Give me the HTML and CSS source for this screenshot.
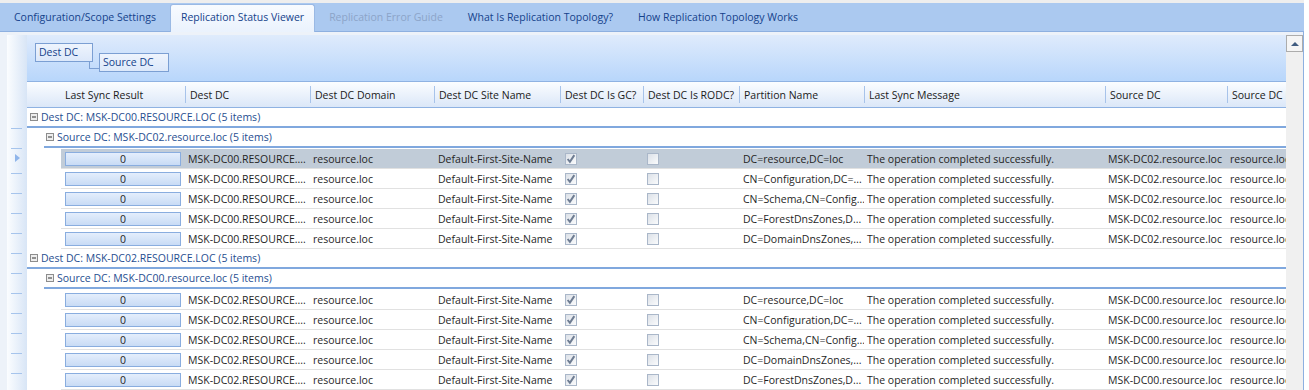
FILE: index.html
```html
<!DOCTYPE html>
<html lang="en">
<head>
    <meta charset="UTF-8">
    <meta name="viewport" content="width=device-width, initial-scale=1.0">
    <title>Replication Status Viewer</title>
    <link rel="stylesheet" href="styles.css">
</head>
<body>
    <div class="window">
        <div class="tabs">
            <div class="tab">Configuration/Scope Settings</div>
            <div class="tab active">Replication Status Viewer</div>
            <div class="tab disabled">Replication Error Guide</div>
            <div class="tab">What Is Replication Topology?</div>
            <div class="tab">How Replication Topology Works</div>
        </div>

        <div class="page">
            <!-- row indicator column -->
            <div class="indicator">
                <div class="ind-top"></div>
                <div class="ind-cell"></div>
                <div class="ind-cell"></div>
                <div class="ind-cell current"><span class="arrow"></span></div>
                <div class="ind-cell"></div>
                <div class="ind-cell"></div>
                <div class="ind-cell"></div>
                <div class="ind-cell"></div>
                <div class="ind-cell"></div>
                <div class="ind-cell"></div>
                <div class="ind-cell"></div>
                <div class="ind-cell"></div>
                <div class="ind-cell"></div>
                <div class="ind-cell"></div>
                <div class="ind-cell"></div>
            </div>

            <div class="grid">
                <div class="group-panel">
                    <div class="gp-item gp-dest">Dest DC</div>
                    <div class="gp-item gp-source">Source DC</div>
                </div>

                <div class="col-header">
                    <div class="hcell">Last Sync Result</div>
                    <div class="hcell">Dest DC</div>
                    <div class="hcell">Dest DC Domain</div>
                    <div class="hcell">Dest DC Site Name</div>
                    <div class="hcell">Dest DC Is GC?</div>
                    <div class="hcell">Dest DC Is RODC?</div>
                    <div class="hcell">Partition Name</div>
                    <div class="hcell">Last Sync Message</div>
                    <div class="hcell">Source DC</div>
                    <div class="hcell">Source DC Domain</div>
                </div>

                <div class="rows">
                    <div class="group">
                        <svg class="toggle" width="8" height="8" viewBox="0 0 8 8"><rect x="0.5" y="0.5" width="7" height="7"/><path d="M2 4h4"/></svg>
                        Dest DC: MSK-DC00.RESOURCE.LOC (5 items)
                    </div>
                    <div class="group lvl2">
                        <svg class="toggle" width="8" height="8" viewBox="0 0 8 8"><rect x="0.5" y="0.5" width="7" height="7"/><path d="M2 4h4"/></svg>
                        Source DC: MSK-DC02.resource.loc (5 items)
                    </div>
                    <div class="block">
                        <div class="row selected">
                            <div class="result"><span class="res">0</span></div>
                            <div>MSK-DC00.RESOURCE....</div>
                            <div>resource.loc</div>
                            <div class="site">Default-First-Site-Name</div>
                            <div class="cb gc"><span class="chk"><svg viewBox="0 0 9 9"><path d="M1.5 4.5l2 2.5 4-6"/></svg></span></div>
                            <div class="cb"><span class="chk"></span></div>
                            <div class="part">DC=resource,DC=loc</div>
                            <div>The operation completed successfully.</div>
                            <div>MSK-DC02.resource.loc</div>
                            <div>resource.loc</div>
                        </div>
                        <div class="row">
                            <div class="result"><span class="res">0</span></div>
                            <div>MSK-DC00.RESOURCE....</div>
                            <div>resource.loc</div>
                            <div class="site">Default-First-Site-Name</div>
                            <div class="cb gc"><span class="chk"><svg viewBox="0 0 9 9"><path d="M1.5 4.5l2 2.5 4-6"/></svg></span></div>
                            <div class="cb"><span class="chk"></span></div>
                            <div class="part">CN=Configuration,DC=...</div>
                            <div>The operation completed successfully.</div>
                            <div>MSK-DC02.resource.loc</div>
                            <div>resource.loc</div>
                        </div>
                        <div class="row">
                            <div class="result"><span class="res">0</span></div>
                            <div>MSK-DC00.RESOURCE....</div>
                            <div>resource.loc</div>
                            <div class="site">Default-First-Site-Name</div>
                            <div class="cb gc"><span class="chk"><svg viewBox="0 0 9 9"><path d="M1.5 4.5l2 2.5 4-6"/></svg></span></div>
                            <div class="cb"><span class="chk"></span></div>
                            <div class="part">CN=Schema,CN=Config...</div>
                            <div>The operation completed successfully.</div>
                            <div>MSK-DC02.resource.loc</div>
                            <div>resource.loc</div>
                        </div>
                        <div class="row">
                            <div class="result"><span class="res">0</span></div>
                            <div>MSK-DC00.RESOURCE....</div>
                            <div>resource.loc</div>
                            <div class="site">Default-First-Site-Name</div>
                            <div class="cb gc"><span class="chk"><svg viewBox="0 0 9 9"><path d="M1.5 4.5l2 2.5 4-6"/></svg></span></div>
                            <div class="cb"><span class="chk"></span></div>
                            <div class="part">DC=ForestDnsZones,D...</div>
                            <div>The operation completed successfully.</div>
                            <div>MSK-DC02.resource.loc</div>
                            <div>resource.loc</div>
                        </div>
                        <div class="row">
                            <div class="result"><span class="res">0</span></div>
                            <div>MSK-DC00.RESOURCE....</div>
                            <div>resource.loc</div>
                            <div class="site">Default-First-Site-Name</div>
                            <div class="cb gc"><span class="chk"><svg viewBox="0 0 9 9"><path d="M1.5 4.5l2 2.5 4-6"/></svg></span></div>
                            <div class="cb"><span class="chk"></span></div>
                            <div class="part">DC=DomainDnsZones,...</div>
                            <div>The operation completed successfully.</div>
                            <div>MSK-DC02.resource.loc</div>
                            <div>resource.loc</div>
                        </div>
                    </div>

                    <div class="group">
                        <svg class="toggle" width="8" height="8" viewBox="0 0 8 8"><rect x="0.5" y="0.5" width="7" height="7"/><path d="M2 4h4"/></svg>
                        Dest DC: MSK-DC02.RESOURCE.LOC (5 items)
                    </div>
                    <div class="group lvl2">
                        <svg class="toggle" width="8" height="8" viewBox="0 0 8 8"><rect x="0.5" y="0.5" width="7" height="7"/><path d="M2 4h4"/></svg>
                        Source DC: MSK-DC00.resource.loc (5 items)
                    </div>
                    <div class="block">
                        <div class="row">
                            <div class="result"><span class="res">0</span></div>
                            <div>MSK-DC02.RESOURCE....</div>
                            <div>resource.loc</div>
                            <div class="site">Default-First-Site-Name</div>
                            <div class="cb gc"><span class="chk"><svg viewBox="0 0 9 9"><path d="M1.5 4.5l2 2.5 4-6"/></svg></span></div>
                            <div class="cb"><span class="chk"></span></div>
                            <div class="part">DC=resource,DC=loc</div>
                            <div>The operation completed successfully.</div>
                            <div>MSK-DC00.resource.loc</div>
                            <div>resource.loc</div>
                        </div>
                        <div class="row">
                            <div class="result"><span class="res">0</span></div>
                            <div>MSK-DC02.RESOURCE....</div>
                            <div>resource.loc</div>
                            <div class="site">Default-First-Site-Name</div>
                            <div class="cb gc"><span class="chk"><svg viewBox="0 0 9 9"><path d="M1.5 4.5l2 2.5 4-6"/></svg></span></div>
                            <div class="cb"><span class="chk"></span></div>
                            <div class="part">CN=Configuration,DC=...</div>
                            <div>The operation completed successfully.</div>
                            <div>MSK-DC00.resource.loc</div>
                            <div>resource.loc</div>
                        </div>
                        <div class="row">
                            <div class="result"><span class="res">0</span></div>
                            <div>MSK-DC02.RESOURCE....</div>
                            <div>resource.loc</div>
                            <div class="site">Default-First-Site-Name</div>
                            <div class="cb gc"><span class="chk"><svg viewBox="0 0 9 9"><path d="M1.5 4.5l2 2.5 4-6"/></svg></span></div>
                            <div class="cb"><span class="chk"></span></div>
                            <div class="part">CN=Schema,CN=Config...</div>
                            <div>The operation completed successfully.</div>
                            <div>MSK-DC00.resource.loc</div>
                            <div>resource.loc</div>
                        </div>
                        <div class="row">
                            <div class="result"><span class="res">0</span></div>
                            <div>MSK-DC02.RESOURCE....</div>
                            <div>resource.loc</div>
                            <div class="site">Default-First-Site-Name</div>
                            <div class="cb gc"><span class="chk"><svg viewBox="0 0 9 9"><path d="M1.5 4.5l2 2.5 4-6"/></svg></span></div>
                            <div class="cb"><span class="chk"></span></div>
                            <div class="part">DC=DomainDnsZones,...</div>
                            <div>The operation completed successfully.</div>
                            <div>MSK-DC00.resource.loc</div>
                            <div>resource.loc</div>
                        </div>
                        <div class="row">
                            <div class="result"><span class="res">0</span></div>
                            <div>MSK-DC02.RESOURCE....</div>
                            <div>resource.loc</div>
                            <div class="site">Default-First-Site-Name</div>
                            <div class="cb gc"><span class="chk"><svg viewBox="0 0 9 9"><path d="M1.5 4.5l2 2.5 4-6"/></svg></span></div>
                            <div class="cb"><span class="chk"></span></div>
                            <div class="part">DC=ForestDnsZones,D...</div>
                            <div>The operation completed successfully.</div>
                            <div>MSK-DC00.resource.loc</div>
                            <div>resource.loc</div>
                        </div>
                    </div>
                </div>
            </div>

            <div class="vscroll">
                <div class="vscroll-btn"><span class="up"></span></div>
            </div>
        </div>
    </div>
</body>
</html>
```

FILE: styles.css
```css
/* Replication status viewer - grid page */
body {
    margin: 0;
    background: #fff;
    font-family: "Open Sans", "Noto Sans", sans-serif;
    font-size: 10.5px;
    color: #1f1f1f;
}

.window {
    width: 1304px;
    height: 390px;
    border-top: 3px solid #eeeeee;
    box-sizing: border-box;
    overflow: hidden;
}

/* tab strip */
.tabs {
    display: flex;
    align-items: flex-end;
    height: 29px;
    box-sizing: border-box;
    padding-left: 3px;
    background: #abc9f0;
    border-bottom: 1px solid #8eb0e0;
}

.tab {
    height: 27px;
    line-height: 26px;
    padding: 0 11px;
    margin-right: 3px;
    box-sizing: border-box;
    color: #15428b;
    white-space: nowrap;
}

.tab.active {
    height: 28px;
    margin-bottom: -1px;
    padding: 0 10px;
    line-height: 25px;
    background: linear-gradient(#f8fbff, #eaf2fd);
    border: 1px solid #9ab9e4;
    border-bottom: none;
    border-radius: 3px 3px 0 0;
}

.tab.disabled {
    color: #8ba4c8;
}

/* page body */
.page {
    display: flex;
    height: 358px;
    box-sizing: border-box;
    padding: 3px 0 0 7px;
    background: #edf2f9;
    border-right: 1px solid #8db0e0;
}

.indicator {
    width: 20px;
    flex: none;
    background: linear-gradient(to right, #fbfdff, #d8e5f6);
}

.ind-top {
    height: 74px;
}

.ind-cell {
    height: 20px;
    box-sizing: border-box;
    background: linear-gradient(#a6c4ec, #a6c4ec) 4px bottom / 11px 1px no-repeat;
}

.ind-cell .arrow {
    display: block;
    width: 0;
    height: 0;
    margin: 5px 0 0 8px;
    border-left: 5px solid #8fb5ea;
    border-top: 4px solid transparent;
    border-bottom: 4px solid transparent;
}

.grid {
    width: 1259px;
    flex: none;
    overflow: hidden;
    background: #fff;
}

/* group by panel */
.group-panel {
    height: 46px;
    box-sizing: border-box;
    padding: 8px 0 0 8px;
    display: flex;
    align-items: flex-start;
    background: linear-gradient(#dfebfc, #b8d6fb);
}

.gp-item {
    height: 19px;
    line-height: 17px;
    box-sizing: border-box;
    padding-left: 3px;
    border: 1px solid #7b9fd3;
    background: linear-gradient(#eef4fd, #dce8fa);
    color: #15428b;
    white-space: nowrap;
}

.gp-dest {
    width: 58px;
}

.gp-source {
    width: 70px;
    margin: 10px 0 0 6px;
    position: relative;
}

.gp-source::before {
    content: "";
    position: absolute;
    left: -11px;
    top: 8px;
    width: 10px;
    height: 6px;
    border-left: 1px solid #7b9fd3;
    border-bottom: 1px solid #7b9fd3;
}

/* column header + rows share the same columns */
.col-header,
.row {
    display: grid;
    grid-template-columns: 124px 125px 124px 126px 83px 96px 125px 241px 122px 140px;
}

.col-header {
    height: 27px;
    box-sizing: border-box;
    padding-left: 34px;
    border-top: 1px solid #8fb2e2;
    border-bottom: 1px solid #8fb2e2;
    background: linear-gradient(#fbfdff, #dbe7f8);
    color: #1a1a1a;
}

.hcell {
    padding-left: 5px;
    line-height: 26px;
    white-space: nowrap;
    overflow: hidden;
}

.hcell:first-child {
    padding-left: 4px;
}

.hcell + .hcell {
    background: linear-gradient(#a7c3ea, #a7c3ea) left center / 1px 17px no-repeat;
}

/* group rows */
.group {
    height: 20px;
    box-sizing: border-box;
    padding-left: 3px;
    display: flex;
    align-items: center;
    border-bottom: 2px solid #80a8de;
    color: #1f4e90;
    white-space: nowrap;
}

.group.lvl2 {
    margin-left: 17px;
    padding-left: 2px;
}

.toggle {
    margin-right: 3px;
    flex: none;
}

.toggle rect {
    fill: #eeeeee;
    stroke: #8d8d8d;
}

.toggle path {
    stroke: #333;
    stroke-width: 1;
}

.block {
    margin-top: 1px;
}

/* data rows */
.row {
    margin-left: 34px;
    height: 20px;
    box-sizing: border-box;
    border-bottom: 1px solid #e1e1e1;
}

.row.selected {
    background: #c1ccd8;
}

.row > div {
    padding-left: 3px;
    line-height: 21px;
    white-space: nowrap;
    overflow: hidden;
}

.row > .site,
.row > .part {
    padding-left: 4px;
}

.row > .result {
    padding: 0;
    display: flex;
    align-items: center;
}

.res {
    flex: 1;
    height: 14px;
    margin: 1px 4px 0;
    box-sizing: border-box;
    line-height: 13px;
    text-align: center;
    border: 1px solid #89addf;
    background: linear-gradient(#e4eefc, #c8dbf5);
}

.row > .cb {
    display: flex;
    align-items: center;
    padding-left: 4px;
}

.row > .cb.gc {
    padding-left: 5px;
}

.chk {
    display: block;
    width: 12px;
    height: 12px;
    box-sizing: border-box;
    border: 1px solid #aab7c9;
    background: linear-gradient(135deg, #dce1e8, #fafbfc);
}

.chk svg {
    display: block;
    width: 10px;
    height: 10px;
    fill: none;
    stroke: #6f7d93;
    stroke-width: 1.8;
}

/* vertical scroll bar */
.vscroll {
    width: 17px;
    flex: none;
    background: #f0f0f0;
}

.vscroll-btn {
    height: 17px;
    box-sizing: border-box;
    border: 1px solid #acacac;
    background: #f5f5f5;
    display: flex;
    justify-content: center;
    align-items: center;
}

.vscroll-btn .up {
    width: 0;
    height: 0;
    border-bottom: 4px solid #405c80;
    border-left: 4px solid transparent;
    border-right: 4px solid transparent;
}
```
